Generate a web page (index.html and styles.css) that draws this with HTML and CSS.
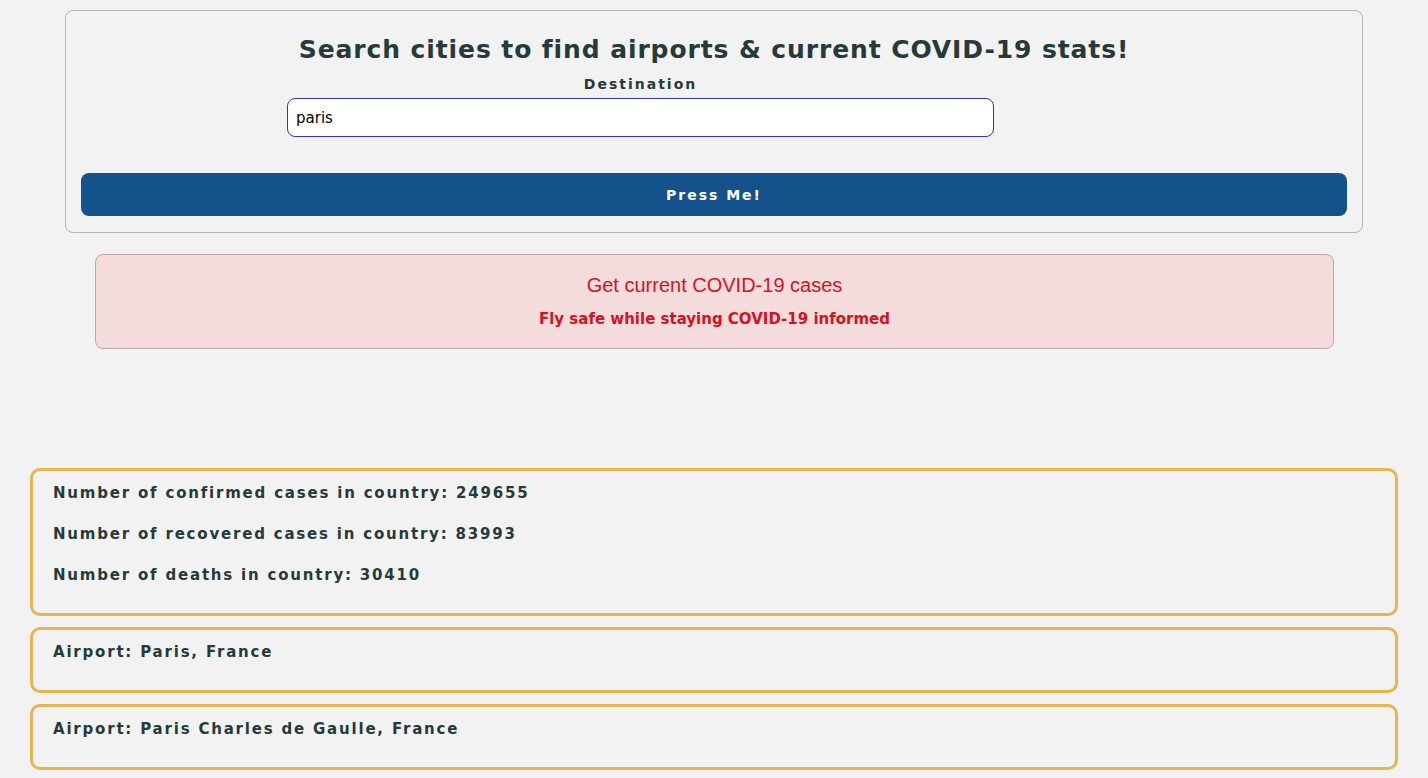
FILE: index.html
```html
<!DOCTYPE html>
<html lang="en">
<head>
<meta charset="utf-8">
<title>COVID-19 Airport Search</title>
<link rel="stylesheet" href="styles.css">
</head>
<body>
  <section class="search-card">
    <h1 class="title">Search cities to find airports &amp; current COVID-19 stats!</h1>
    <div class="field">
      <label class="field-label" for="dest">Destination</label>
      <input class="field-input" id="dest" type="text" value="paris">
    </div>
    <button class="submit-btn" type="button">Press Me!</button>
  </section>

  <section class="alert-box">
    <p class="alert-title">Get current COVID-19 cases</p>
    <p class="alert-sub">Fly safe while staying COVID-19 informed</p>
  </section>

  <section class="results">
    <div class="result-card">
      <p class="result-line">Number of confirmed cases in country: 249655</p>
      <p class="result-line">Number of recovered cases in country: 83993</p>
      <p class="result-line">Number of deaths in country: 30410</p>
    </div>
    <div class="result-card">
      <p class="result-line">Airport: Paris, France</p>
    </div>
    <div class="result-card">
      <p class="result-line">Airport: Paris Charles de Gaulle, France</p>
    </div>
  </section>
</body>
</html>
```

FILE: styles.css
```css
* { box-sizing: border-box; }

html, body {
  margin: 0;
  padding: 0;
  background: #f2f2f2;
}

body {
  font-family: "DejaVu Sans", Verdana, sans-serif;
  color: #253a3a;
  padding-top: 10px;
}

.search-card {
  margin: 0 65px;
  border: 1px solid #b3b3b3;
  border-radius: 8px;
  padding: 23px 15px 16px;
}

.title {
  margin: 0;
  text-align: center;
  font-size: 25px;
  line-height: 32px;
  font-weight: bold;
  letter-spacing: 0.9px;
}

.field {
  width: 707px;
  margin: 9px 0 0 206px;
  display: flex;
  flex-direction: column;
  align-items: center;
}

.field-label {
  font-size: 14px;
  line-height: 18px;
  font-weight: bold;
  letter-spacing: 2px;
}

.field-input {
  margin-top: 5px;
  width: 100%;
  height: 39px;
  border: 1px solid #3232d0;
  border-radius: 8px;
  background: #fff;
  padding: 0 8px;
  font-family: "DejaVu Sans", Verdana, sans-serif;
  font-size: 15px;
  color: #000;
  outline: none;
}

.submit-btn {
  display: block;
  width: 100%;
  margin-top: 36px;
  height: 43px;
  border: none;
  border-radius: 8px;
  background: #14528c;
  color: #fff;
  font-family: "DejaVu Sans", Verdana, sans-serif;
  font-weight: bold;
  font-size: 14px;
  letter-spacing: 2px;
}

.alert-box {
  margin: 21px 94px 0 95px;
  height: 95px;
  border: 1px solid #c4a4a4;
  border-radius: 8px;
  background: #f5dcdc;
  color: #d8121c;
  text-align: center;
  padding-top: 17px;
}

.alert-title {
  margin: 0;
  font-family: "Liberation Sans", Arial, sans-serif;
  font-size: 20px;
  line-height: 26px;
}

.alert-sub {
  margin: 11px 0 0;
  font-size: 15px;
  line-height: 20px;
  font-weight: bold;
}

.results {
  margin: 119px 30px 0;
  display: flex;
  flex-direction: column;
  gap: 11px;
}

.result-card {
  border: 3px solid #e8b551;
  border-radius: 10px;
  padding: 12px 20px 28px;
}

.result-line {
  margin: 0;
  font-size: 15px;
  line-height: 20px;
  font-weight: bold;
  letter-spacing: 1.8px;
}

.result-line + .result-line {
  margin-top: 21px;
}
```
